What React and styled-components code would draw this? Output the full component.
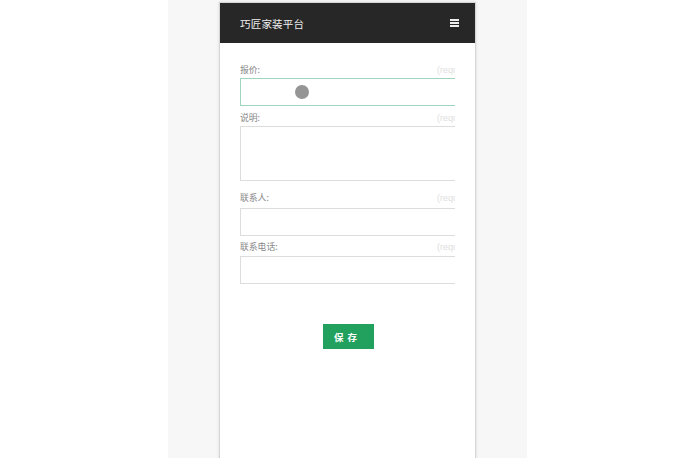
import React from 'react';
import styled, { createGlobalStyle } from 'styled-components';

const GlobalStyle = createGlobalStyle`
  html, body {
    margin: 0;
    padding: 0;
    background: #ffffff;
    font-family: "Noto Sans CJK SC", "Noto Sans", sans-serif;
  }
  * { box-sizing: border-box; }
`;

const Column = styled.div`
  width: 359px;
  height: 458px;
  margin-left: 168px;
  padding: 2px 0 0 51px;
  background: #f7f7f7;
  overflow: hidden;
`;

const Card = styled.div`
  width: 257px;
  height: 470px;
  background: #ffffff;
  border: 1px solid #d6d6d6;
  box-shadow: 0 0 3px rgba(0, 0, 0, 0.12);
`;

const Header = styled.header`
  height: 40px;
  background: #272727;
  display: flex;
  align-items: center;
  justify-content: space-between;
  padding: 0 16px 0 20px;
`;

const Title = styled.span`
  color: #f0f0f0;
  font-size: 10.5px;
  letter-spacing: 0.2px;
`;

const Body = styled.div`
  margin: 0 20px;
  padding-top: 20px;
  overflow: hidden;
`;

const Form = styled.form`
  width: 236px;
  display: flex;
  flex-direction: column;
`;

const LabelRow = styled.div`
  display: flex;
  justify-content: space-between;
  align-items: center;
  height: 13px;
  margin-bottom: ${({ gap }) => gap || 2}px;
`;

const Label = styled.label`
  font-size: 8.8px;
  color: #888;
`;

const Required = styled.span`
  font-family: "Liberation Sans", Arial, sans-serif;
  font-size: 9px;
  color: #dedede;
`;

const FieldWrap = styled.div`
  position: relative;
  margin-bottom: ${({ gap }) => gap}px;
`;

const Input = styled.div`
  height: ${({ tall }) => (tall ? 55 : 28)}px;
  border: 1px solid ${({ focused }) => (focused ? '#9ed5bf' : '#dcdcdc')};
  background: #fff;
`;

const Touch = styled.span`
  position: absolute;
  left: 55px;
  top: 7px;
  width: 14px;
  height: 14px;
  border-radius: 50%;
  background: #959595;
`;

const SaveButton = styled.button`
  align-self: center;
  margin: 40px 0 0 -19px;
  width: 51px;
  height: 25px;
  border: none;
  background: #22a05d;
  color: #fff;
  font-family: "Noto Sans CJK SC", sans-serif;
  font-size: 9.5px;
  font-weight: bold;
  letter-spacing: 4px;
  padding-left: 4px;
`;

const MenuIcon = () => (
  <svg width="9" height="8" viewBox="0 0 9 8">
    <rect x="0" y="0" width="9" height="2" fill="#eee" />
    <rect x="0" y="3" width="9" height="2" fill="#eee" />
    <rect x="0" y="6" width="9" height="2" fill="#eee" />
  </svg>
);

const fields = [
  { label: '报价:', focused: true, gap: 5 },
  { label: '说明:', tall: true, gap: 10 },
  { label: '联系人:', gap: 4, labelGap: 4 },
  { label: '联系电话:', gap: 0, labelGap: 3 },
];

export default function App() {
  return (
    <>
      <GlobalStyle />
      <Column>
        <Card>
          <Header>
            <Title>巧匠家装平台</Title>
            <MenuIcon />
          </Header>
          <Body>
            <Form onSubmit={(e) => e.preventDefault()}>
              {fields.map((f) => (
                <React.Fragment key={f.label}>
                  <LabelRow gap={f.labelGap}>
                    <Label>{f.label}</Label>
                    <Required>(required)</Required>
                  </LabelRow>
                  <FieldWrap gap={f.gap}>
                    <Input tall={f.tall} focused={f.focused} />
                    {f.focused && <Touch />}
                  </FieldWrap>
                </React.Fragment>
              ))}
              <SaveButton type="submit">保存</SaveButton>
            </Form>
          </Body>
        </Card>
      </Column>
    </>
  );
}
